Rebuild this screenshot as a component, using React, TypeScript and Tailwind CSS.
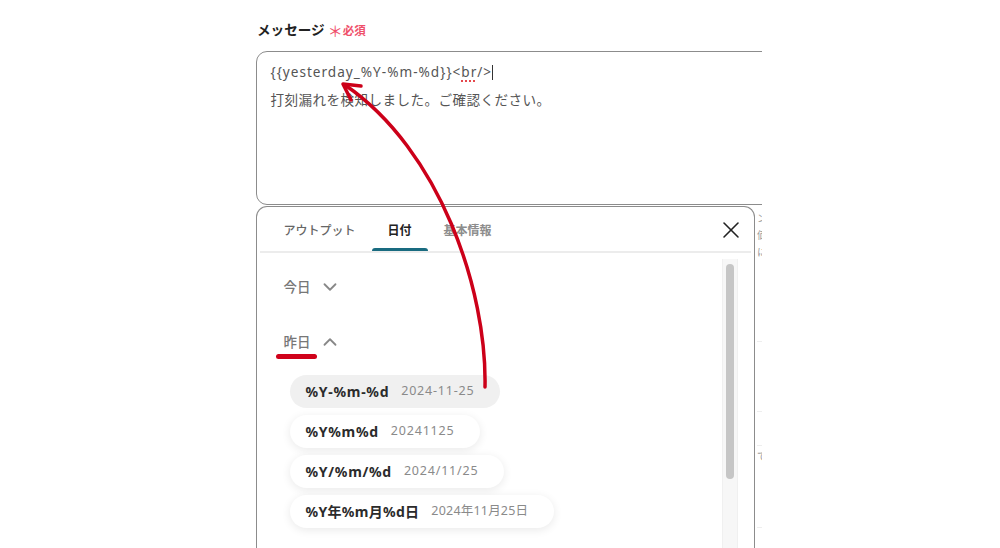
import { ChevronDown, ChevronUp, X } from "lucide-react";

const font = { fontFamily: '"Noto Sans", "Noto Sans CJK JP", sans-serif' };

const formats = [
  { label: "%Y-%m-%d", sample: "2024-11-25", hover: true },
  { label: "%Y%m%d", sample: "20241125" },
  { label: "%Y/%m/%d", sample: "2024/11/25" },
  { label: "%Y年%m月%d日", sample: "2024年11月25日", tight: true },
];

function FormatPill({ label, sample, hover, tight }: { label: string; sample: string; hover?: boolean; tight?: boolean }) {
  return (
    <button
      type="button"
      className={`flex h-[33px] w-fit items-center gap-3 rounded-full pl-4 pr-[26px] ${
        hover ? "bg-[#f0f0f0]" : "bg-white shadow-[0_2px_10px_rgba(0,0,0,0.09)]"
      }`}
    >
      <span className={`text-[14px] font-bold text-[#2b2b2b] ${tight ? "tracking-[0.3px]" : "tracking-[0.7px]"}`}>{label}</span>
      <span className={`text-[12.5px] text-[#8a8a8a] ${tight ? "tracking-[0.2px]" : "tracking-[0.8px]"}`}>{sample}</span>
    </button>
  );
}

function BehindStrip() {
  return (
    <div className="flex w-[40px] shrink-0 flex-col pl-[2px] text-[10px] leading-[17px] text-[#9a9a9a]">
      <div className="pt-[4px]">ン</div>
      <div>価</div>
      <div>に</div>
      <div className="mt-[80px] border-t border-[#eee]" />
      <div className="mt-[69px] border-t border-[#eee]" />
      <div className="mt-[33px] border-t border-[#eee]" />
      <div className="mt-[2px]">で</div>
      <div className="mt-[62px] border-t border-[#eee]" />
    </div>
  );
}

export default function App() {
  return (
    <div className="relative h-[548px] w-[1000px] overflow-hidden bg-white" style={font}>
      <div className="ml-[256px] w-[506px] overflow-hidden pt-[20px]">
        <div className="flex items-center pl-[1px]">
          <span className="text-[13.6px] font-bold text-[#222]">メッセージ</span>
          <span className="ml-[3px] mt-[3px] text-[15px] leading-none text-[#ef4f6b]">＊</span>
          <span className="text-[11.5px] font-bold text-[#ef4f6b]">必須</span>
        </div>

        <div className="mt-[11px] h-[154px] w-[540px] rounded-[11px] border-[1.5px] border-[#8c8c8c] pl-[13.5px] pt-[6px] text-[13.6px] leading-[28px] text-[#555]">
          <div className="flex items-center tracking-[1px]">
            <span>
              {"{{yesterday_%Y-%m-%d}}<"}
              <span className="underline decoration-[#e5484d] decoration-dotted decoration-[1.5px] underline-offset-[3px]">br</span>
              {"/>"}
            </span>
            <span className="inline-block h-[15px] w-[1px] bg-[#333]" />
          </div>
          <div className="tracking-[0.4px]">打刻漏れを検知しました。ご確認ください。</div>
        </div>

        <div className="mt-[1px] flex">
          <div className="h-[360px] w-[499px] shrink-0 rounded-t-[11px] border-[1.5px] border-b-0 border-[#8c8c8c] bg-white">
            <div className="flex h-[44px] items-stretch pl-[10.5px] pr-[9px]">
              <div className="flex items-center px-4 pt-[3px] text-[12px] font-medium text-[#666]">アウトプット</div>
              <div className="relative flex items-center px-4 pt-[3px] text-[12px] font-bold text-[#222]">
                日付
                <span className="absolute bottom-0 left-0 right-0 h-[3px] rounded-t-full bg-[#196b80]" />
              </div>
              <div className="flex items-center px-4 pt-[3px] text-[12px] font-bold text-[#8d8d8d]">基本情報</div>
              <div className="ml-auto flex items-center pt-[2px]">
                <X size={28} strokeWidth={1.3} className="text-[#222]" />
              </div>
            </div>
            <div className="mx-[3px] h-[1.5px] bg-[#ececec]" />

            <div className="flex">
              <div className="flex-1 pl-[26.5px]">
                <div className="mt-[22px] flex h-[24px] items-center gap-[8px] text-[13.5px] font-medium text-[#777]">
                  <span>今日</span>
                  <ChevronDown size={22} strokeWidth={2} className="text-[#888]" />
                </div>
                <div className="mt-[31px] flex h-[24px] items-center gap-[8px] text-[13.5px] font-medium text-[#777]">
                  <span className="relative">
                    昨日
                    <span className="absolute left-[-8px] top-[22px] h-[5px] w-[41px] rounded-full bg-[#d0021b]" />
                  </span>
                  <ChevronUp size={22} strokeWidth={2} className="text-[#888]" />
                </div>
                <div className="ml-[6px] mt-[21px] flex flex-col gap-[7px]">
                  {formats.map((f) => (
                    <FormatPill key={f.label} {...f} />
                  ))}
                </div>
              </div>
              <div className="mr-[16px] mt-[6px] h-[300px] w-[16px] border-x border-[#f0f0f0] bg-[#f7f7f7] px-[3px] pt-[5px]">
                <div className="h-[215px] rounded-full bg-[#c6c6c6]" />
              </div>
            </div>
          </div>
          <BehindStrip />
        </div>
      </div>

      <svg className="pointer-events-none absolute left-0 top-0" width="1000" height="548" fill="none">
        <path d="M485 387 C487 290 440 150 345 85" stroke="#cc0019" strokeWidth="3.5" strokeLinecap="round" />
        <path d="M361 86 L343 84 L351 100" stroke="#cc0019" strokeWidth="3.5" strokeLinecap="round" strokeLinejoin="round" />
      </svg>
    </div>
  );
}
